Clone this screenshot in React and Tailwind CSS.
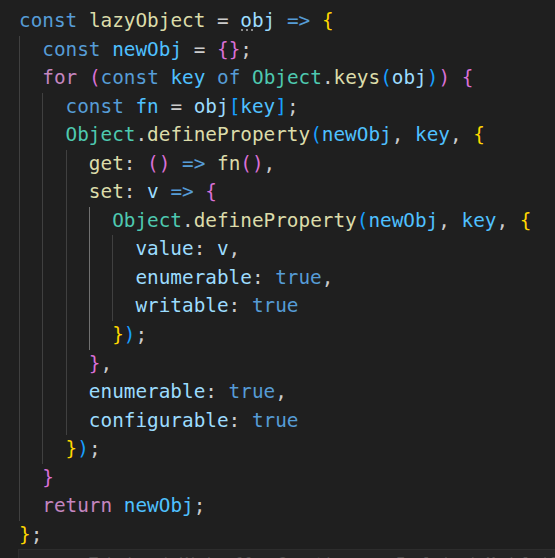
import React from 'react';

const K = 'text-[#569cd6]';
const C = 'text-[#c586c0]';
const F = 'text-[#dcdcaa]';
const P = 'text-[#9cdcfe]';
const V = 'text-[#4fc1ff]';
const T = 'text-[#4ec9b0]';
const D = 'text-[#cccccc]';
const B1 = 'text-[#ffd700]';
const B2 = 'text-[#da70d6]';
const B3 = 'text-[#179fff]';

// [indent, tokens]
const lines = [
  [0, [['const', K], [' '], ['lazyObject', F], [' = ', D], ['HINT'], [' '], ['=>', K], [' '], ['{', B1]]],
  [1, [['const', K], [' '], ['newObj', V], [' = ', D], ['{}', B2], [';', D]]],
  [1, [['for', C], [' '], ['(', B2], ['const', K], [' '], ['key', V], [' '], ['of', K], [' '], ['Object', T], ['.', D], ['keys', F], ['(', B3], ['obj', P], [')', B3], [')', B2], [' '], ['{', B2]]],
  [2, [['const', K], [' '], ['fn', V], [' = ', D], ['obj', P], ['[', B3], ['key', V], [']', B3], [';', D]]],
  [2, [['Object', T], ['.', D], ['defineProperty', F], ['(', B3], ['newObj', V], [', ', D], ['key', V], [', ', D], ['{', B1]]],
  [3, [['get', F], [': ', D], ['()', B2], [' '], ['=>', K], [' '], ['fn', F], ['()', B2], [',', D]]],
  [3, [['set', F], [': ', D], ['v', P], [' '], ['=>', K], [' '], ['{', B2]]],
  [4, [['Object', T], ['.', D], ['defineProperty', F], ['(', B3], ['newObj', V], [', ', D], ['key', V], [', ', D], ['{', B1]]],
  [5, [['value', P], [': ', D], ['v', P], [',', D]]],
  [5, [['enumerable', P], [': ', D], ['true', K], [',', D]]],
  [5, [['writable', P], [': ', D], ['true', K]]],
  [4, [['}', B1], [')', B3], [';', D]]],
  [3, [['}', B2], [',', D]]],
  [3, [['enumerable', P], [': ', D], ['true', K], [',', D]]],
  [3, [['configurable', P], [': ', D], ['true', K]]],
  [2, [['}', B1], [')', B3], [';', D]]],
  [1, [['}', B2]]],
  [1, [['return', C], [' '], ['newObj', V], [';', D]]],
  [0, [['}', B1], [';', D]]],
];

const Hint = () => (
  <span className="relative text-[#9cdcfe]">
    obj
    <span className="absolute left-[1px] bottom-[1px] flex gap-[3px]">
      <span className="w-[2px] h-[2px] bg-[#8c8c8c]" />
      <span className="w-[2px] h-[2px] bg-[#8c8c8c]" />
      <span className="w-[2px] h-[2px] bg-[#8c8c8c]" />
    </span>
  </span>
);

const Line = ({ indent, tokens, row }) => (
  <div className="flex h-[28.55px] leading-[28.55px] whitespace-pre">
    {Array.from({ length: indent }).map((_, i) => {
      const active = i === 3 && row >= 7 && row <= 11;
      return (
        <span
          key={i}
          className={active ? 'w-[2ch] h-full border-l border-[#707070]' : 'w-[2ch] h-full border-l border-[#404040]'}
        />
      );
    })}
    <span>
      {tokens.map(([text, cls], i) =>
        text === 'HINT' ? <Hint key={i} /> : (
          <span key={i} className={cls || D}>{text}</span>
        )
      )}
    </span>
  </div>
);

export default function App() {
  return (
    <div className="w-[555px] h-[558px] overflow-hidden bg-[#1f1f1f] font-['DejaVu_Sans_Mono',monospace] text-[19.35px]">
      <div className="pt-[7px] pl-[19px]">
        {lines.map(([indent, tokens], i) => (
          <Line key={i} indent={indent} tokens={tokens} row={i} />
        ))}
      </div>
      <div className="ml-[18px] h-[40px] bg-[#252526] border-t border-l border-[#2d2d2d] pl-[70px] pt-[3px] text-[15px] text-[#4a4a4a] whitespace-pre">
        Tabnine | Kick off   2 actions    Explain | Model |?
      </div>
    </div>
  );
}
